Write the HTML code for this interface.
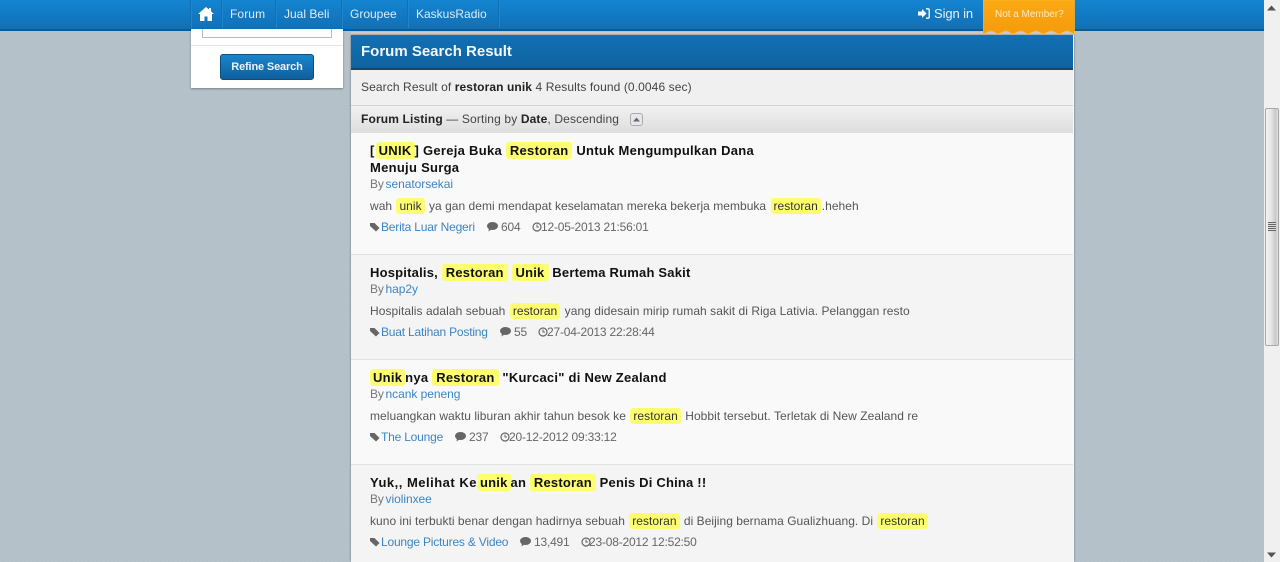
<!DOCTYPE html>
<html><head><meta charset="utf-8">
<style>
*{box-sizing:border-box}
html,body{margin:0;padding:0}
body{width:1280px;height:562px;overflow:hidden;position:relative;background:#b4c0c9 repeating-linear-gradient(135deg,#b3bfc8 0 1px,#b6c2ca 1px 3px);font-family:"Liberation Sans",sans-serif;font-size:12px;color:#555}
.a{position:absolute;white-space:nowrap}
#bar{position:absolute;left:0;top:0;width:1265px;height:31px;background:linear-gradient(#1484d0,#1170b6);border-bottom:2px solid #0d5a92}
.sep{position:absolute;top:0;width:1px;height:28px;background:#1070b6;box-shadow:1px 0 0 #1d86cd}
.nav{position:absolute;top:6px;color:#dcecf8;font-size:12px;line-height:16px}
#sb{position:absolute;left:1264px;top:0;width:16px;height:562px;background:#f0f0f0}
#thumb{position:absolute;left:1px;top:108px;width:14px;height:238px;border:1px solid #a8a8a8;border-radius:2px;background:linear-gradient(90deg,#f2f2f2,#e4e4e4 45%,#c8c8c8 80%,#e0e0e0)}
#side{position:absolute;left:191px;top:29px;width:152px;height:59px;background:#fff;box-shadow:0 1px 2px rgba(0,0,0,.35)}
#main{position:absolute;left:351px;top:35px;width:723px;height:527px;background:#f9f9f9;box-shadow:0 0 2px rgba(0,0,0,.45)}
#hd{position:absolute;left:0;top:0;width:722px;height:35px;background:linear-gradient(#1270b5,#0f639f);border-bottom:2px solid #0b4a78;color:#f2f7fb;font-weight:bold;font-size:15px;line-height:33px;padding-left:10px}
#sr{position:absolute;left:0;top:35px;width:722px;height:36px;background:#f0f0f0;border-bottom:1px solid #d2d2d2;color:#444;line-height:34px;padding-left:10px;letter-spacing:.1px}
#sr b,#fl b{color:#222}
#fl{position:absolute;left:0;top:71px;width:722px;height:27px;background:linear-gradient(#f1f1f1,#dedede);color:#444;line-height:27px;padding-left:10px;letter-spacing:.14px}
.row{position:absolute;left:0;width:722px;height:105px;border-bottom:1px solid #e2e2e2}
.t{position:absolute;left:19px;color:#111;font-weight:bold;font-size:13px;line-height:17px;white-space:nowrap}
.by{position:absolute;left:19px;color:#777;white-space:nowrap;line-height:14px;letter-spacing:-.1px}
.by a{margin-left:-1.500px;letter-spacing:-.05px}
.d{position:absolute;left:19px;color:#555;white-space:nowrap;line-height:16px}
.m{position:absolute;color:#666;white-space:nowrap;line-height:14px;letter-spacing:-.2px}
a{color:#3c85c4;text-decoration:none}
mark{background:#fdfd72;color:#111;border-radius:3px;padding:1px 4px}
.d mark{color:#333;padding:1px 3px;margin:0 1px}
svg{position:absolute}
</style></head><body>
<div id="bar"></div>
<div class="sep" style="left:190px"></div><div class="sep" style="left:221px"></div><div class="sep" style="left:275px"></div><div class="sep" style="left:341px"></div><div class="sep" style="left:407px"></div><div class="sep" style="left:498px"></div>
<svg style="left:198px;top:7px" width="16" height="14" viewBox="0 0 16 14"><path d="M8 0 L11 2.6 V1 H13 V4.4 L16 7 H14 V14 H9.5 V9.5 H6.5 V14 H2 V7 H0 Z" fill="#fff"/></svg>
<div class="nav" style="left:230px;letter-spacing:.1px">Forum</div>
<div class="nav" style="left:284px">Jual Beli</div>
<div class="nav" style="left:350px">Groupee</div>
<div class="nav" style="left:416px">KaskusRadio</div>
<svg style="left:918px;top:8px" width="12" height="11" viewBox="0 0 12 11"><path d="M0 3.5 H4 V1 L8.5 5.5 L4 10 V7.500 H0 Z" fill="#fff"/><path d="M8 .8 H10 Q11.2 .8 11.2 2 V9 Q11.2 10.2 10 10.2 H8" fill="none" stroke="#fff" stroke-width="1.3"/></svg>
<div class="nav" style="left:934px;font-size:13px;top:6px;color:#e4f0f9;letter-spacing:-.1px">Sign in</div>

<div id="side">
<div style="position:absolute;left:11px;top:0;width:130px;height:9px;background:#fff;border:1px solid #bbb;border-top:0"></div>
<div style="position:absolute;left:0;top:16px;width:152px;height:1px;background:#e4e4e4"></div>
<div class="a" style="left:29px;top:25px;width:94px;height:26px;border-radius:3px;background:linear-gradient(#1b85cc,#0e5f9e);border:1px solid #0c4f82;color:#e8f3fb;font-weight:bold;font-size:11px;letter-spacing:-.15px;line-height:24px;text-align:center">Refine Search</div>
</div>

<div style="position:absolute;left:351px;top:32px;width:723px;height:3px;background:#c9cdd1"></div>
<div id="main">
<div id="hd">Forum Search Result</div>
<div id="sr">Search Result of <b>restoran unik</b> 4 Results found (0.0046 sec)</div>
<div id="fl"><b>Forum Listing</b> — Sorting by <b>Date</b>, Descending
<span style="position:absolute;left:279px;top:7px;width:13px;height:13px;border:1px solid #aaa;border-radius:3px;background:#e8e8e8"></span>
<svg style="left:282px;top:11px" width="7" height="5" viewBox="0 0 7 5"><path d="M0 4.5 L3.5 .5 L7 4.5 Z" fill="#667"/></svg>
</div>

<div class="row" style="top:98px;height:122px;background:#f9f9f9">
<div class="t" style="top:9px;letter-spacing:.28px">[<mark style="padding:1px 3px;margin:0 0 0 1px">UNIK</mark>] Gereja Buka <mark>Restoran</mark> Untuk Mengumpulkan Dana<br>Menuju Surga</div>
<div class="by" style="top:44px">By <a>senatorsekai</a></div>
<div class="d" style="top:65px;letter-spacing:.03px">wah <mark>unik</mark> ya gan demi mendapat keselamatan mereka bekerja membuka <mark>restoran</mark>.heheh</div>
<svg style="left:19px;top:89px" width="10" height="10" viewBox="0 0 10 10"><path d="M0 1 H4.500 L9.500 6 L6 9.500 L0 4 Z" fill="#666"/></svg>
<div class="m" style="left:30px;top:87px"><a>Berita Luar Negeri</a></div>
<svg style="left:136px;top:89px" width="11" height="10" viewBox="0 0 11 10"><ellipse cx="5.500" cy="4" rx="5.500" ry="4" fill="#666"/><path d="M2 6 L1.500 9.500 L5 7 Z" fill="#666"/></svg>
<div class="m" style="left:150px;top:87px">604</div>
<svg style="left:181px;top:89px" width="10" height="10" viewBox="0 0 10 10"><circle cx="5" cy="5" r="4" fill="none" stroke="#666" stroke-width="1.2"/><path d="M5 2.500 V5 H7" fill="none" stroke="#666"/></svg>
<div class="m" style="left:190px;top:87px">12-05-2013 21:56:01</div>
</div>

<div class="row" style="top:220px;background:#f4f4f4">
<div class="t" style="top:9px;letter-spacing:.2px">Hospitalis, <mark>Restoran</mark> <mark>Unik</mark> Bertema Rumah Sakit</div>
<div class="by" style="top:27px">By <a>hap2y</a></div>
<div class="d" style="top:48px;letter-spacing:.055px">Hospitalis adalah sebuah <mark>restoran</mark> yang didesain mirip rumah sakit di Riga Lativia. Pelanggan resto</div>
<svg style="left:19px;top:72px" width="10" height="10" viewBox="0 0 10 10"><path d="M0 1 H4.500 L9.500 6 L6 9.500 L0 4 Z" fill="#666"/></svg>
<div class="m" style="left:30px;top:70px"><a>Buat Latihan Posting</a></div>
<svg style="left:149px;top:72px" width="11" height="10" viewBox="0 0 11 10"><ellipse cx="5.500" cy="4" rx="5.500" ry="4" fill="#666"/><path d="M2 6 L1.500 9.500 L5 7 Z" fill="#666"/></svg>
<div class="m" style="left:163px;top:70px">55</div>
<svg style="left:187px;top:72px" width="10" height="10" viewBox="0 0 10 10"><circle cx="5" cy="5" r="4" fill="none" stroke="#666" stroke-width="1.2"/><path d="M5 2.500 V5 H7" fill="none" stroke="#666"/></svg>
<div class="m" style="left:196px;top:70px">27-04-2013 22:28:44</div>
</div>

<div class="row" style="top:325px;background:#f9f9f9">
<div class="t" style="top:9px;letter-spacing:.25px"><mark style="padding:1px 3px">Unik</mark>nya <mark>Restoran</mark> "Kurcaci" di New Zealand</div>
<div class="by" style="top:27px">By <a>ncank peneng</a></div>
<div class="d" style="top:48px;letter-spacing:.055px">meluangkan waktu liburan akhir tahun besok ke <mark>restoran</mark> Hobbit tersebut. Terletak di New Zealand re</div>
<svg style="left:19px;top:72px" width="10" height="10" viewBox="0 0 10 10"><path d="M0 1 H4.500 L9.500 6 L6 9.500 L0 4 Z" fill="#666"/></svg>
<div class="m" style="left:30px;top:70px"><a>The Lounge</a></div>
<svg style="left:104px;top:72px" width="11" height="10" viewBox="0 0 11 10"><ellipse cx="5.500" cy="4" rx="5.500" ry="4" fill="#666"/><path d="M2 6 L1.500 9.500 L5 7 Z" fill="#666"/></svg>
<div class="m" style="left:118px;top:70px">237</div>
<svg style="left:149px;top:72px" width="10" height="10" viewBox="0 0 10 10"><circle cx="5" cy="5" r="4" fill="none" stroke="#666" stroke-width="1.2"/><path d="M5 2.500 V5 H7" fill="none" stroke="#666"/></svg>
<div class="m" style="left:158px;top:70px">20-12-2012 09:33:12</div>
</div>

<div class="row" style="top:430px;height:97px;background:#f4f4f4;border-bottom:0">
<div class="t" style="top:9px;letter-spacing:.2px"><span style="letter-spacing:.5px">Yuk,, Melihat Ke</span><mark style="padding:1px 3px">unik</mark>an <mark>Restoran</mark> Penis Di China !!</div>
<div class="by" style="top:27px">By <a>violinxee</a></div>
<div class="d" style="top:48px;letter-spacing:.03px">kuno ini terbukti benar dengan hadirnya sebuah <mark>restoran</mark> di Beijing bernama Gualizhuang. Di <mark>restoran</mark></div>
<svg style="left:19px;top:72px" width="10" height="10" viewBox="0 0 10 10"><path d="M0 1 H4.500 L9.500 6 L6 9.500 L0 4 Z" fill="#666"/></svg>
<div class="m" style="left:30px;top:70px"><a>Lounge Pictures &amp; Video</a></div>
<svg style="left:169px;top:72px" width="11" height="10" viewBox="0 0 11 10"><ellipse cx="5.500" cy="4" rx="5.500" ry="4" fill="#666"/><path d="M2 6 L1.500 9.500 L5 7 Z" fill="#666"/></svg>
<div class="m" style="left:183px;top:70px">13,491</div>
<svg style="left:230px;top:72px" width="10" height="10" viewBox="0 0 10 10"><circle cx="5" cy="5" r="4" fill="none" stroke="#666" stroke-width="1.2"/><path d="M5 2.500 V5 H7" fill="none" stroke="#666"/></svg>
<div class="m" style="left:238px;top:70px">23-08-2012 12:52:50</div>
</div>
</div>

<svg style="left:983px;top:0" width="92" height="36" viewBox="0 0 92 36"><defs><linearGradient id="o" x1="0" y1="0" x2="0" y2="1"><stop offset="0" stop-color="#fbaa14"/><stop offset="1" stop-color="#f59a0c"/></linearGradient></defs><path d="M0 0 H91.500 V34 L84 30.500 L76 34 L68 30.500 L60 34 L53 30.500 L45 34 L38 30.500 L30 34 L23 30.500 L15 34 L8 30.500 L0 34 Z" fill="url(#o)" stroke="#f8c030" stroke-width=".6"/></svg>
<div class="a" style="left:995px;top:8px;color:#fde9c4;font-size:10px;line-height:13px;letter-spacing:-.02px">Not a Member?</div>

<div id="sb">
<svg style="left:3px;top:5px" width="9" height="6" viewBox="0 0 9 6"><path d="M0 5.500 L4.500 .5 L9 5.500 Z" fill="#555"/></svg>
<div id="thumb"><div style="position:absolute;left:2px;top:113px;width:8px;height:9px;background:repeating-linear-gradient(#666 0 1px,#ddd 1px 2px)"></div></div>
<svg style="left:3px;top:552px" width="9" height="6" viewBox="0 0 9 6"><path d="M0 .5 L4.500 5.500 L9 .5 Z" fill="#555"/></svg>
</div>
</body></html>
